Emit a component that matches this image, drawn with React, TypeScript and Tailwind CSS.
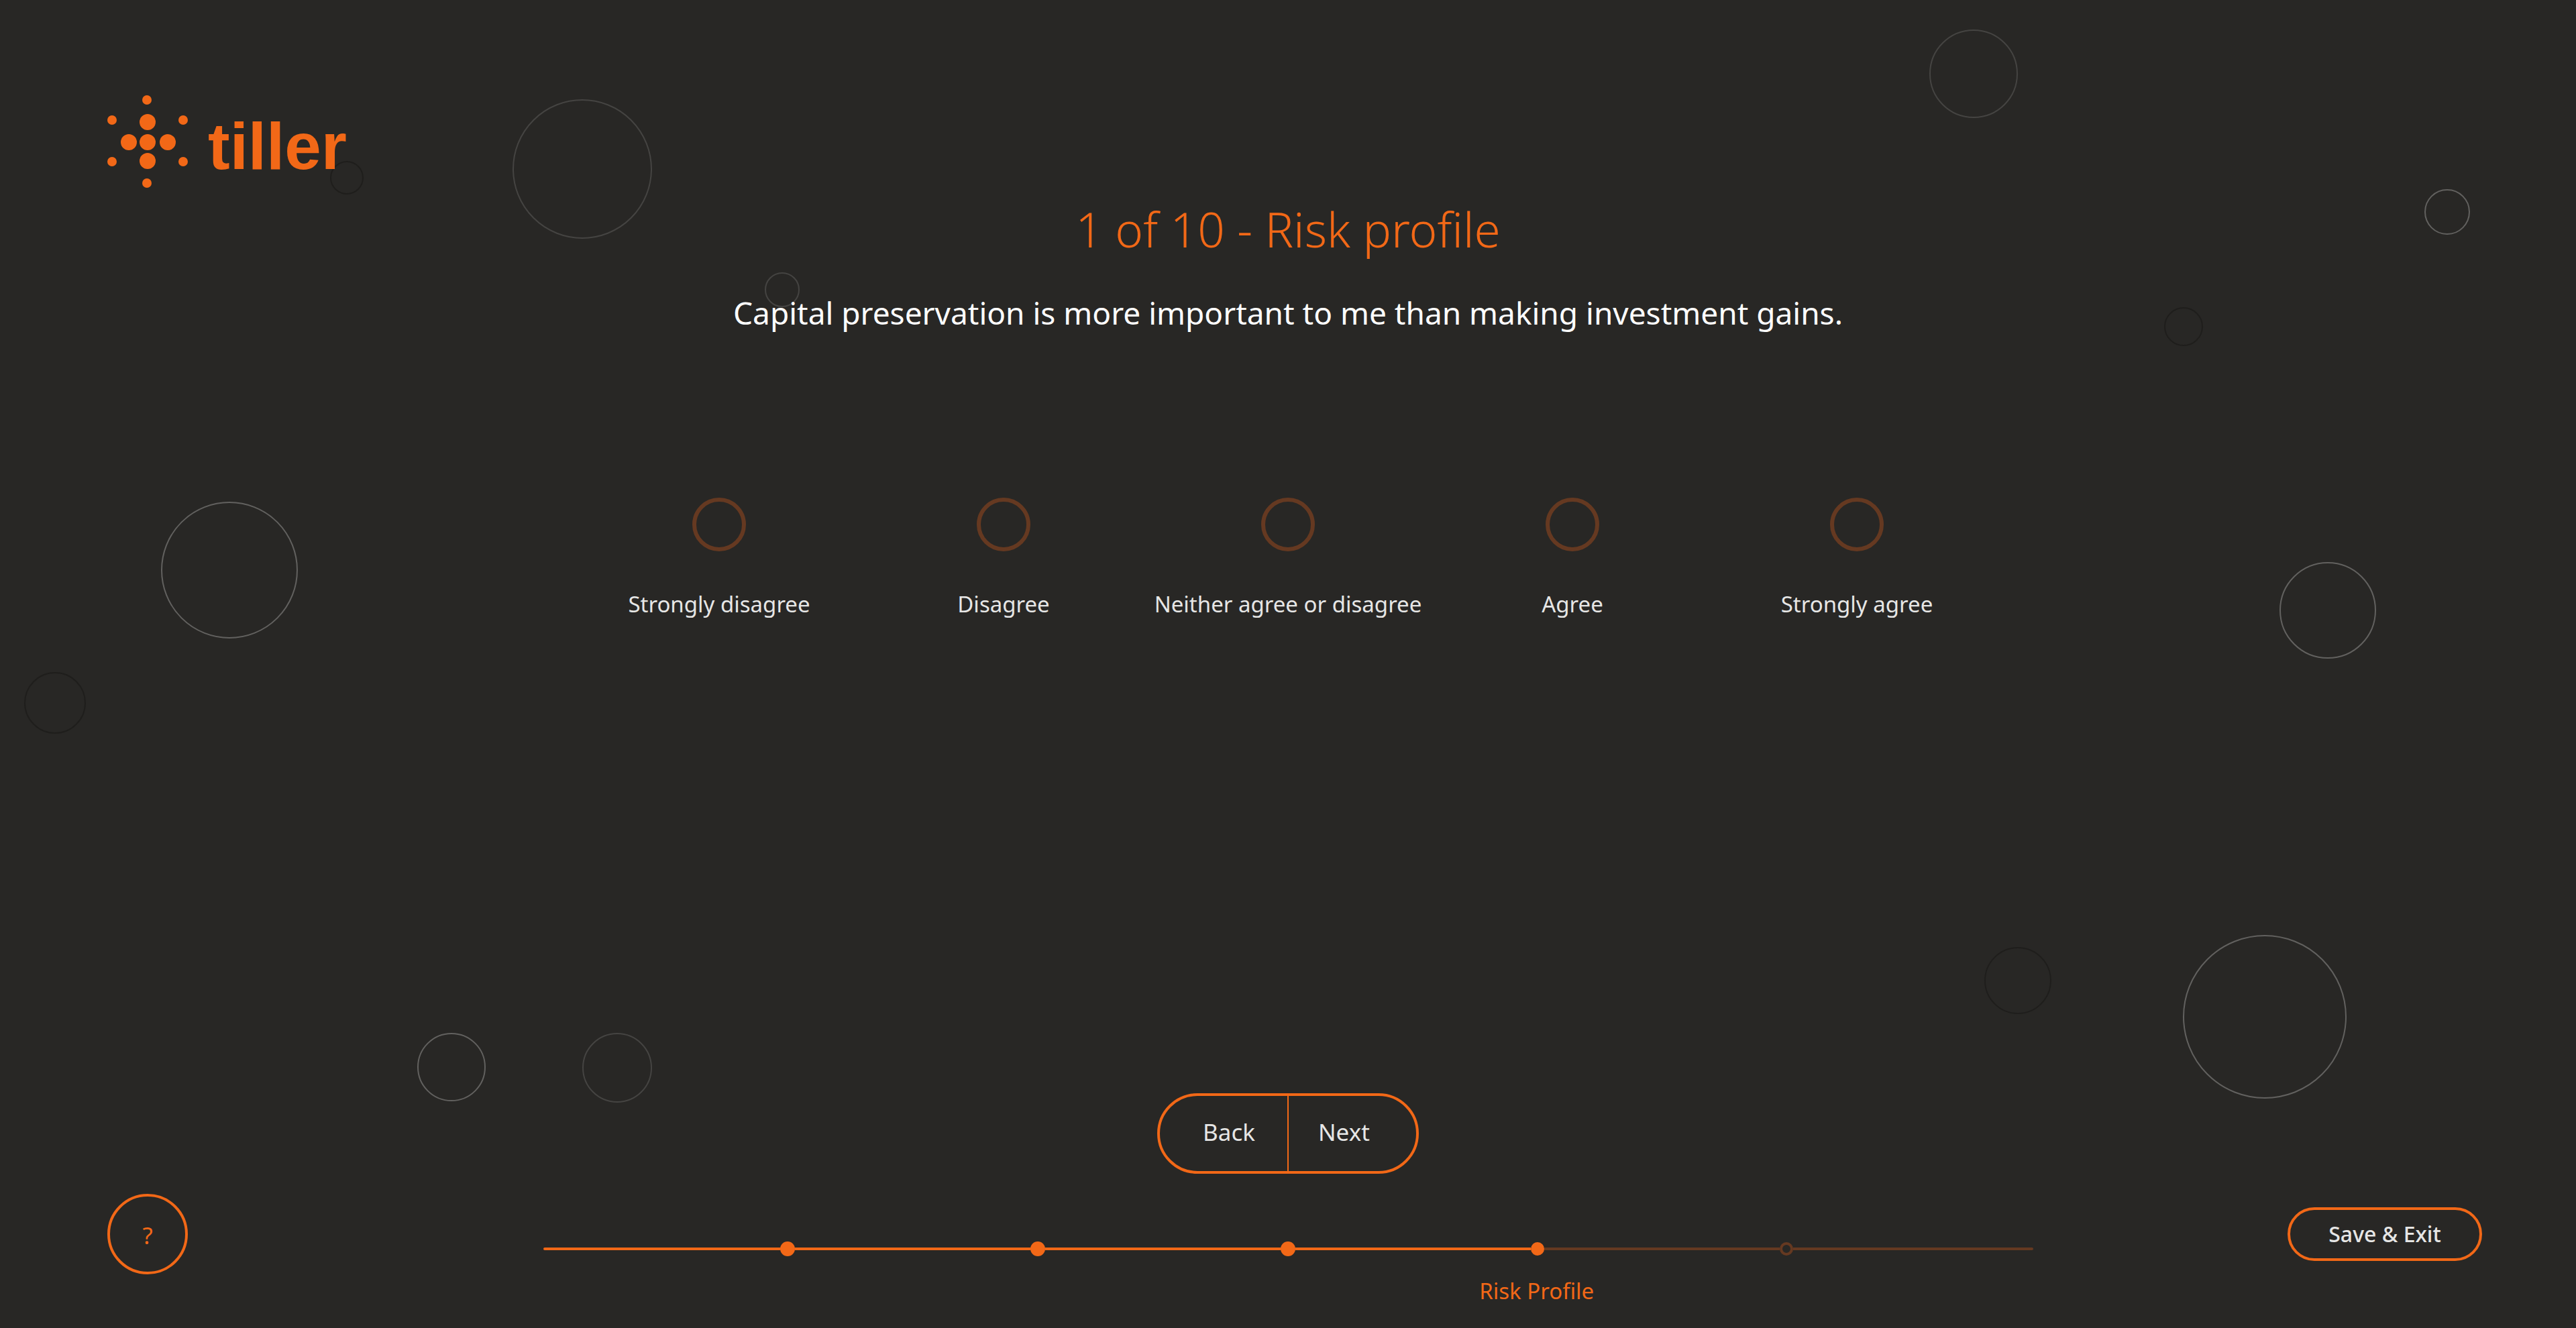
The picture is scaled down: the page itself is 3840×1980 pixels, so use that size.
import { useState } from 'react';

const BUBBLES = [
  'left-[764px] top-[148px] size-[208px] border-[#454442]',
  'left-[1140px] top-[406px] size-[52px] border-[#454442]',
  'left-[492px] top-[240px] size-[50px] border-[#1f1e1c]',
  'left-[240px] top-[748px] size-[204px] border-[#62615f]',
  'left-[36px] top-[1002px] size-[92px] border-[#1f1e1c]',
  'right-[832px] top-[44px] size-[132px] border-[#454442]',
  'right-[158px] top-[282px] size-[68px] border-[#62615f]',
  'right-[556px] top-[458px] size-[58px] border-[#1f1e1c]',
  'right-[298px] top-[838px] size-[144px] border-[#62615f]',
  'right-[342px] top-[1394px] size-[244px] border-[#62615f]',
  'right-[782px] top-[1412px] size-[100px] border-[#1f1e1c]',
  'left-[622px] top-[1540px] size-[102px] border-[#62615f]',
  'left-[868px] top-[1540px] size-[104px] border-[#454442]',
];

const ANSWERS = ['Strongly disagree', 'Disagree', 'Neither agree or disagree', 'Agree', 'Strongly agree'];

function Bubbles() {
  return (
    <div aria-hidden="true" className="pointer-events-none absolute inset-0 overflow-hidden">
      {BUBBLES.map((bubble) => (
        <span key={bubble} className={`absolute rounded-full border-2 ${bubble}`} />
      ))}
    </div>
  );
}

function Logo() {
  const small = [[59, 7], [7, 37], [113, 37], [7, 99], [113, 99], [59, 131]];
  const large = [[60, 40], [32, 70], [60, 70], [90, 70], [60, 98]];
  return (
    <a href="#home" aria-label="tiller" className="block w-max">
      <svg viewBox="0 0 370 138" className="h-[138px] w-[370px] overflow-visible fill-[#f26817]">
        {small.map(([x, y]) => (
          <circle key={`${x}-${y}`} cx={x} cy={y} r="7" />
        ))}
        {large.map(([x, y]) => (
          <circle key={`${x}-${y}`} cx={x} cy={y} r="12" />
        ))}
        <text x="150" y="110" className="font-['Liberation_Sans',sans-serif] text-[98px] font-bold">
          tiller
        </text>
      </svg>
    </a>
  );
}

function Progress() {
  return (
    <div>
      <div role="progressbar" aria-label="Risk Profile" aria-valuemin={0} aria-valuemax={6} aria-valuenow={4} className="flex items-center">
        <span className="h-1 flex-[353] rounded-l-full bg-[#f26817]" />
        <span className="size-[22px] rounded-full bg-[#f26817]" />
        <span className="h-1 flex-[351] bg-[#f26817]" />
        <span className="size-[22px] rounded-full bg-[#f26817]" />
        <span className="h-1 flex-[351] bg-[#f26817]" />
        <span className="size-[22px] rounded-full bg-[#f26817]" />
        <span className="h-1 flex-[351] bg-[#f26817]" />
        <span className="size-5 rounded-full bg-[#f26817]" />
        <span className="h-1 flex-[351] bg-[#653921]" />
        <span className="size-5 rounded-full border-4 border-[#653921]" />
        <span className="h-1 flex-[358] rounded-r-full bg-[#653921]" />
      </div>
      <div className="mt-7 grid grid-cols-3">
        <span className="col-span-2 col-start-2 text-center text-[33px] leading-[48px] text-[#f26817]">Risk Profile</span>
      </div>
    </div>
  );
}

export default function App() {
  const [answer, setAnswer] = useState('');
  return (
    <div className="relative flex min-h-screen flex-col bg-[#282725] font-['Noto_Sans',sans-serif] text-[#e6e6e5]">
      <Bubbles />
      <header className="relative px-[160px] pt-[142px]">
        <Logo />
      </header>

      <main className="relative flex flex-1 flex-col items-center">
        <h1 className="mt-[22px] text-[71px] leading-[80px] font-light text-[#f26817]">1 of 10 - Risk profile</h1>
        <p id="question" className="mt-[52px] text-center text-[46px] leading-[64px] text-white">
          Capital preservation is more important to me than making investment gains.
        </p>
        <div role="radiogroup" aria-labelledby="question" className="mt-[244px] grid grid-cols-[repeat(5,424px)]">
          {ANSWERS.map((a) => (
            <label key={a} className="flex cursor-pointer flex-col items-center gap-[55px] text-[33px] leading-[48px]">
              <input
                type="radio"
                name="answer"
                checked={answer === a}
                onChange={() => setAnswer(a)}
                className="size-20 appearance-none rounded-full border-[6px] border-[#653921] checked:border-[#f26817]"
              />
              {a}
            </label>
          ))}
        </div>
        <nav className="mt-auto mb-[30px] flex h-[120px] w-[390px] overflow-hidden rounded-full border-4 border-[#f26817] text-[35px] leading-[48px]">
          <button type="button" className="flex-1 border-r-2 border-[#f26817] pr-12 pb-1 text-right">Back</button>
          <button type="button" className="w-[190px] pb-1 pl-11 text-left">Next</button>
        </nav>
      </main>

      <footer className="relative grid grid-cols-[650fr_2221fr_669fr] items-start pr-[140px] pb-[31px] pl-[160px]">
        <button type="button" aria-label="Help" className="size-[120px] rounded-full border-4 border-[#f26817] pt-1 text-[35px] leading-[48px] text-[#f26817]">
          ?
        </button>
        <div className="pt-[71px]">
          <Progress />
        </div>
        <button type="button" className="mt-5 h-20 w-[290px] justify-self-end rounded-full border-4 border-[#f26817] text-[32px] leading-[48px] font-medium">
          Save &amp; Exit
        </button>
      </footer>
    </div>
  );
}
